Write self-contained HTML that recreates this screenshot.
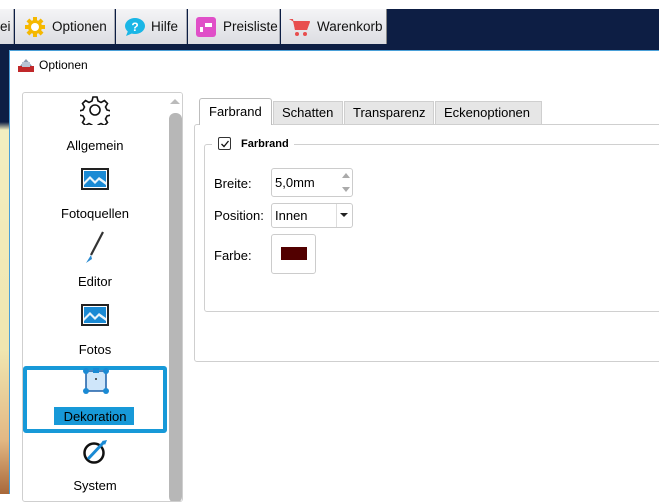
<!DOCTYPE html>
<html><head><style>
*{box-sizing:border-box}
body{margin:0;width:659px;height:494px;overflow:hidden;background:#fff;font-family:"Segoe UI","Liberation Sans",sans-serif;font-size:13px;color:#000;position:relative}
.abs{position:absolute}
.topbar{left:0;top:9px;width:659px;height:41px;background:#0d1e44}
.tab{position:absolute;top:9px;height:35px;background:linear-gradient(#f4f4f6,#dcdde2);border-right:1px solid #a9acb5;display:flex;align-items:center;font-size:13.5px;color:#111}
.strip{left:0;top:50px;width:9px;height:444px;background:linear-gradient(#0d1e44 0,#0d1e44 72px,#f2eec0 80px,#f0e6b0 300px,#e3b884 390px,#a8683a 444px)}
.dlg{left:9px;top:50px;width:650px;height:444px;background:#fff;border-left:1px solid #4aa0d8;border-top:1px solid #4aa0d8}
.item{position:absolute;left:0;width:144px;text-align:center;font-size:13px}
</style></head><body>
<div class="abs topbar"></div>
<div class="tab" style="left:0;width:14px;padding-left:0">ei</div>
<div class="tab" style="left:15px;width:100px;padding-left:9px">
<svg width="22" height="22" viewBox="0 0 22 22"><g fill="#f5b800"><circle cx="11" cy="11" r="7"/><rect x="9" y="1" width="4" height="20"/><rect x="1" y="9" width="20" height="4"/><rect x="9" y="1" width="4" height="20" transform="rotate(45 11 11)"/><rect x="9" y="1" width="4" height="20" transform="rotate(-45 11 11)"/></g><circle cx="11" cy="11" r="4" fill="#fff"/></svg>
<span style="margin-left:6px">Optionen</span></div>
<div class="tab" style="left:116px;width:71px;padding-left:8px">
<svg width="22" height="20" viewBox="0 0 22 20"><ellipse cx="11" cy="9" rx="10" ry="8" fill="#1ab6e6"/><path d="M4 14 L2 19 L9 16Z" fill="#1ab6e6"/><text x="11" y="14" font-size="12" font-weight="bold" fill="#fff" text-anchor="middle" font-family="Liberation Sans">?</text></svg>
<span style="margin-left:5px">Hilfe</span></div>
<div class="tab" style="left:188px;width:92px;padding-left:8px">
<svg width="20" height="20"><rect width="20" height="20" rx="3" fill="#e04fc8"/><rect x="9" y="6" width="7" height="4" fill="#fff"/><rect x="4" y="10" width="3" height="5" fill="#fff"/></svg>
<span style="margin-left:7px">Preisliste</span></div>
<div class="tab" style="left:281px;width:106px;padding-left:8px;border-right:1px solid #888">
<svg width="22" height="20" viewBox="0 0 22 20"><path d="M0 2 H4 L6 13 H18 L21 5 H5" fill="#e84e4e"/><path d="M4 4 H21 L18 13 H6Z" fill="#e84e4e"/><circle cx="8" cy="17" r="2" fill="#e84e4e"/><circle cx="16" cy="17" r="2" fill="#e84e4e"/></svg>
<span style="margin-left:6px">Warenkorb</span></div>
<div class="abs strip"></div>
<div class="abs dlg"></div>
<svg class="abs" style="left:17px;top:57px" width="18" height="16"><rect x="1" y="9" width="16" height="6" fill="#c0282a"/><path d="M3 9 L9 2 L15 9Z" fill="#8a9ab0"/><rect x="5" y="5" width="8" height="5" fill="#b8c4d4"/></svg>
<div class="abs" style="left:39px;top:58px;font-size:12px">Optionen</div>

<div class="abs" style="left:22px;top:92px;width:161px;height:410px;border:1px solid #cfcfcf;border-radius:3px;overflow:hidden">
 <div class="abs" style="left:145px;top:0;width:15px;height:410px;background:#fff"></div>
 <div class="abs" style="left:147px;top:6px;width:0;height:0;border-left:5px solid transparent;border-right:5px solid transparent;border-bottom:5px solid #bbb"></div>
 <div class="abs" style="left:146px;top:20px;width:13px;height:390px;background:#b7b7b7;border-radius:6px"></div>
 <svg class="abs" style="left:57px;top:2px" width="30" height="30" viewBox="0 0 30 30"><g fill="none" stroke="#111" stroke-width="1.6"><path d="M13 2h4l1 4 3 1.5 3.5-2 3 3-2 3.5 1.5 3 4 1v4l-4 1-1.5 3 2 3.5-3 3-3.5-2-3 1.5-1 4h-4l-1-4-3-1.5-3.5 2-3-3 2-3.5-1.5-3-4-1v-4l4-1 1.5-3-2-3.5 3-3 3.5 2 3-1.5z"/><circle cx="15" cy="15" r="5"/></g></svg>
 <div class="item" style="top:45px">Allgemein</div>
 <svg class="abs" style="left:58px;top:75px" width="28" height="22"><rect x="1" y="1" width="26" height="20" fill="#fff" stroke="#222" stroke-width="2"/><rect x="3" y="3" width="22" height="16" fill="#1a8ad4"/><path d="M3 14 L9 8 L14 13 L18 9 L25 14 V19 H3Z" fill="#fff" opacity=".9"/><path d="M3 17 L9 11 L14 16 L18 12 L25 17 V19 H3Z" fill="#1a8ad4"/></svg>
 <div class="item" style="top:113px">Fotoquellen</div>
 <svg class="abs" style="left:60px;top:138px" width="24" height="34"><path d="M20 1 L8 24" stroke="#333" stroke-width="2.2"/><path d="M8 24 L3 32 L9 28Z" fill="#2a8ad0"/></svg>
 <div class="item" style="top:181px">Editor</div>
 <svg class="abs" style="left:58px;top:211px" width="28" height="22"><rect x="1" y="1" width="26" height="20" fill="#fff" stroke="#222" stroke-width="2"/><rect x="3" y="3" width="22" height="16" fill="#1a8ad4"/><path d="M3 14 L9 8 L14 13 L18 9 L25 14 V19 H3Z" fill="#fff" opacity=".9"/><path d="M3 17 L9 11 L14 16 L18 12 L25 17 V19 H3Z" fill="#1a8ad4"/></svg>
 <div class="item" style="top:249px">Fotos</div>
 <div class="abs" style="left:0;top:273px;width:144px;height:67px;border:4px solid #1799d8;border-radius:3px"></div>
 <svg class="abs" style="left:58px;top:273px" width="30" height="30"><rect x="5" y="5" width="20" height="20" fill="#cfe6fa" stroke="#1a5fa8" stroke-width="1.5"/><g fill="#1a8ad4"><circle cx="5" cy="5" r="3"/><circle cx="25" cy="5" r="3"/><circle cx="5" cy="25" r="3"/><circle cx="25" cy="25" r="3"/><rect x="12" y="2" width="6" height="5"/></g><circle cx="15" cy="13" r="1" fill="#333"/></svg>
 <div class="abs" style="left:31px;top:314px;width:80px;height:18px;background:#1799d8"></div>
 <div class="item" style="top:316px">Dekoration</div>
 <svg class="abs" style="left:59px;top:346px" width="26" height="26"><circle cx="12" cy="14" r="9.5" fill="none" stroke="#111" stroke-width="2.5"/><path d="M6 20 L22 3" stroke="#1a8ad4" stroke-width="3"/><path d="M20 2 L25 1 L23 6Z" fill="#1a8ad4"/></svg>
 <div class="item" style="top:385px">System</div>
</div>

<div class="abs" style="left:194px;top:124px;width:470px;height:238px;border:1px solid #cfcfcf;border-radius:3px"></div>
<div class="abs" style="left:199px;top:98px;width:73px;height:27px;background:#fff;border:1px solid #bdbdbd;border-bottom:none;border-radius:3px 3px 0 0;padding:5px 0 0 9px">Farbrand</div>
<div class="abs" style="left:273px;top:101px;width:70px;height:23px;background:#e6e6e6;border:1px solid #cfcfcf;border-bottom:none;padding:3px 0 0 8px">Schatten</div>
<div class="abs" style="left:344px;top:101px;width:90px;height:23px;background:#e6e6e6;border:1px solid #cfcfcf;border-bottom:none;padding:3px 0 0 8px">Transparenz</div>
<div class="abs" style="left:435px;top:101px;width:107px;height:23px;background:#e6e6e6;border:1px solid #cfcfcf;border-bottom:none;padding:3px 0 0 8px">Eckenoptionen</div>

<div class="abs" style="left:204px;top:144px;width:460px;height:168px;border:1px solid #d0d0d0;border-radius:3px"></div>
<div class="abs" style="left:212px;top:134px;width:82px;height:20px;background:#fff"></div>
<div class="abs" style="left:218px;top:137px;width:13px;height:13px;border:1px solid #333;border-radius:2px"></div>
<svg class="abs" style="left:219px;top:138px" width="12" height="12"><path d="M2.5 6 L5 8.5 L9.5 3" fill="none" stroke="#111" stroke-width="1.3"/></svg>
<div class="abs" style="left:241px;top:138px;font-size:11px;font-weight:bold">Farbrand</div>

<div class="abs" style="left:214px;top:176px">Breite:</div>
<div class="abs" style="left:271px;top:168px;width:82px;height:29px;border:1px solid #ccc;border-radius:3px;padding:6px 0 0 3px">5,0mm</div>
<div class="abs" style="left:342px;top:173px;border-left:4px solid transparent;border-right:4px solid transparent;border-bottom:5px solid #aaa"></div>
<div class="abs" style="left:342px;top:187px;border-left:4px solid transparent;border-right:4px solid transparent;border-top:5px solid #aaa"></div>

<div class="abs" style="left:214px;top:208px">Position:</div>
<div class="abs" style="left:271px;top:203px;width:82px;height:25px;border:1px solid #ccc;border-radius:3px;padding:4px 0 0 3px">Innen</div>
<div class="abs" style="left:336px;top:204px;width:1px;height:23px;background:#ddd"></div>
<div class="abs" style="left:340px;top:213px;border-left:4px solid transparent;border-right:4px solid transparent;border-top:4px solid #222"></div>

<div class="abs" style="left:214px;top:248px">Farbe:</div>
<div class="abs" style="left:271px;top:234px;width:45px;height:40px;border:1px solid #ccc;border-radius:3px"></div>
<div class="abs" style="left:281px;top:247px;width:26px;height:13px;background:#520000"></div>
</body></html>
